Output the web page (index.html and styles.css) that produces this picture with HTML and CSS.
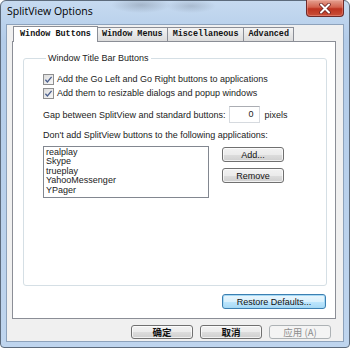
FILE: index.html
```html
<!DOCTYPE html>
<html lang="en">
<head>
    <meta charset="UTF-8">
    <title>SplitView Options</title>
    <link rel="stylesheet" href="styles.css">
</head>
<body>
    <div class="window">
        <div class="titlebar">
            <span class="title">SplitView Options</span>
            <div class="close">
                <svg width="14" height="11" viewBox="0 0 14 11">
                    <path d="M3 1.5 L11 9.5 M11 1.5 L3 9.5" stroke="#6b2424" stroke-width="3.6" stroke-linecap="round"/>
                    <path d="M3 1.5 L11 9.5 M11 1.5 L3 9.5" stroke="#fff" stroke-width="2" stroke-linecap="round"/>
                </svg>
            </div>
        </div>

        <div class="client">
            <div class="tabs">
                <div class="tab active">Window Buttons</div>
                <div class="tab">Window Menus</div>
                <div class="tab wide">Miscellaneous</div>
                <div class="tab">Advanced</div>
            </div>

            <div class="panel">
                <fieldset class="group">
                    <legend>Window Title Bar Buttons</legend>

                    <div class="check-row">
                        <span class="checkbox">
                            <svg width="9" height="9" viewBox="0 0 9 9"><path d="M1.4 4.7 L3.4 6.9 L7.6 1.8" fill="none" stroke="#4a5f8e" stroke-width="1.3"/></svg>
                        </span>
                        Add the Go Left and Go Right buttons to applications
                    </div>
                    <div class="check-row">
                        <span class="checkbox">
                            <svg width="9" height="9" viewBox="0 0 9 9"><path d="M1.4 4.7 L3.4 6.9 L7.6 1.8" fill="none" stroke="#4a5f8e" stroke-width="1.3"/></svg>
                        </span>
                        Add them to resizable dialogs and popup windows
                    </div>

                    <div class="gap-row">
                        Gap between SplitView and standard buttons:
                        <span class="num-input">0</span>
                        pixels
                    </div>

                    <div class="list-label">Don't add SplitView buttons to the following applications:</div>

                    <div class="list-row">
                        <div class="listbox">
                            <div>realplay</div>
                            <div>Skype</div>
                            <div>trueplay</div>
                            <div>YahooMessenger</div>
                            <div>YPager</div>
                        </div>
                        <div class="list-buttons">
                            <div class="btn small">Add...</div>
                            <div class="btn small">Remove</div>
                        </div>
                    </div>
                </fieldset>

                <div class="panel-foot">
                    <div class="btn focused restore">Restore Defaults...</div>
                </div>
            </div>

            <div class="dialog-buttons">
                <div class="btn cjk">确定</div>
                <div class="btn cjk">取消</div>
                <div class="btn cjk disabled">应用 (A)</div>
            </div>
        </div>
    </div>
</body>
</html>
```

FILE: styles.css
```css
body {
    margin: 0;
    background: #fff;
    font-family: "Liberation Sans", Arial, sans-serif;
    font-size: 9px;
    color: #222;
}

.window {
    width: 350px;
    height: 348px;
    box-sizing: border-box;
    border: 1px solid #5d6b7c;
    border-radius: 6px 6px 4px 4px;
    padding: 0 5px 5px;
    display: flex;
    flex-direction: column;
    background:
        radial-gradient(ellipse 30px 8px at 140px 4px, rgba(90, 100, 115, 0.3), transparent),
        radial-gradient(ellipse 25px 7px at 190px 5px, rgba(90, 100, 115, 0.25), transparent),
        linear-gradient(#c6daf0, #b3cce9 40px, #bfd5ee);
}

.titlebar {
    height: 23px;
    display: flex;
    justify-content: space-between;
    align-items: flex-start;
}

.title {
    padding: 3px 0 0 1px;
    font-family: "Open Sans", sans-serif;
    font-size: 10.5px;
    color: #000;
}

.close {
    width: 38px;
    height: 17px;
    margin-top: -1px;
    box-sizing: border-box;
    border: 1px solid #6e2a2a;
    border-top: none;
    border-radius: 0 0 4px 4px;
    display: flex;
    justify-content: center;
    align-items: center;
    background: linear-gradient(#e4a191, #d3624e 45%, #bd3320 55%, #c9503a);
    box-shadow: inset 0 0 0 1px rgba(255, 190, 180, 0.35);
}

.client {
    flex: 1;
    display: flex;
    flex-direction: column;
    border: 1px solid #8da2bb;
    background: #f0f0f0;
    padding: 1px 7px 2px 5px;
}

/* tabs */

.tabs {
    height: 15px;
    display: flex;
    align-items: flex-end;
    padding-left: 1px;
}

.tab {
    height: 13px;
    line-height: 13px;
    padding: 0 4px;
    border: 1px solid #8b8e96;
    border-bottom: none;
    margin-left: -1px;
    font-family: "Liberation Mono", monospace;
    font-weight: bold;
    font-size: 8.45px;
    color: #111;
    background: linear-gradient(#f4f4f4, #e6e6e6 55%, #dcdcdc);
}

.tab:first-child {
    margin-left: 0;
}

.tab.wide {
    padding: 0 5px;
}

.tab.active {
    height: 15px;
    line-height: 15px;
    padding: 0 6px;
    margin-bottom: -1px;
    position: relative;
    z-index: 1;
    background: #fff;
}

.panel {
    flex: 1;
    display: flex;
    flex-direction: column;
    background: #fff;
    border: 1px solid #8b8e96;
    padding: 10px 8px 9px 10px;
}

/* group box */

.group {
    flex: 1;
    margin: 0;
    border: 1px solid #d5dfe5;
    border-radius: 3px;
    padding: 8px 10px 0 19px;
}

.group legend {
    padding: 0 2px;
    margin-left: 3px;
    line-height: 12px;
}

.check-row {
    height: 14px;
    display: flex;
    align-items: center;
    gap: 3px;
}

.checkbox {
    width: 11px;
    height: 11px;
    box-sizing: border-box;
    border: 1px solid #8f8f8f;
    background: linear-gradient(135deg, #dcdcdc, #f8f8f8);
    display: flex;
    justify-content: center;
    align-items: center;
}

.gap-row {
    margin-top: 6px;
    display: flex;
    align-items: center;
    gap: 4px;
}

.num-input {
    width: 31px;
    height: 17px;
    box-sizing: border-box;
    border: 1px solid #d6dadf;
    border-top-color: #abadb3;
    background: #fff;
    text-align: right;
    padding-right: 6px;
    line-height: 14px;
}

.list-label {
    margin-top: 6px;
    line-height: 12px;
}

.list-row {
    margin-top: 5px;
    display: flex;
    gap: 13px;
}

.listbox {
    width: 166px;
    height: 52px;
    box-sizing: border-box;
    border: 1px solid #828790;
    padding: 1px 2px;
    line-height: 9.4px;
    background: #fff;
}

.list-buttons {
    padding-top: 1px;
    display: flex;
    flex-direction: column;
    gap: 6px;
}

/* buttons */

.btn {
    height: 15px;
    box-sizing: border-box;
    border: 1px solid #707070;
    border-radius: 3px;
    display: flex;
    justify-content: center;
    align-items: center;
    color: #111;
    background: linear-gradient(#f2f2f2, #ebebeb 50%, #dddddd 51%, #cfcfcf);
    box-shadow: inset 0 0 0 1px rgba(255, 255, 255, 0.7);
}

.btn.small {
    width: 62px;
}

.panel-foot {
    margin-top: 8px;
    display: flex;
    justify-content: flex-end;
    padding-right: 1px;
}

.btn.restore {
    width: 104px;
}

.btn.focused {
    border-color: #3c7fb1;
    box-shadow: inset 0 0 0 1px #a5d9f5;
    background: linear-gradient(#eaf6fd, #d9f0fc 50%, #bee6fd 51%, #a7d9f5);
}

.dialog-buttons {
    margin-top: 6px;
    height: 14px;
    display: flex;
    justify-content: flex-end;
    gap: 7px;
    padding-right: 5px;
}

.btn.cjk {
    width: 62px;
    height: 14px;
    font-family: "Noto Sans CJK SC", sans-serif;
    font-weight: bold;
    font-size: 9.5px;
}

.btn.disabled {
    border-color: #adb2b5;
    background: #f4f4f4;
    box-shadow: none;
    color: #8d8d8d;
    font-weight: normal;
}
```
